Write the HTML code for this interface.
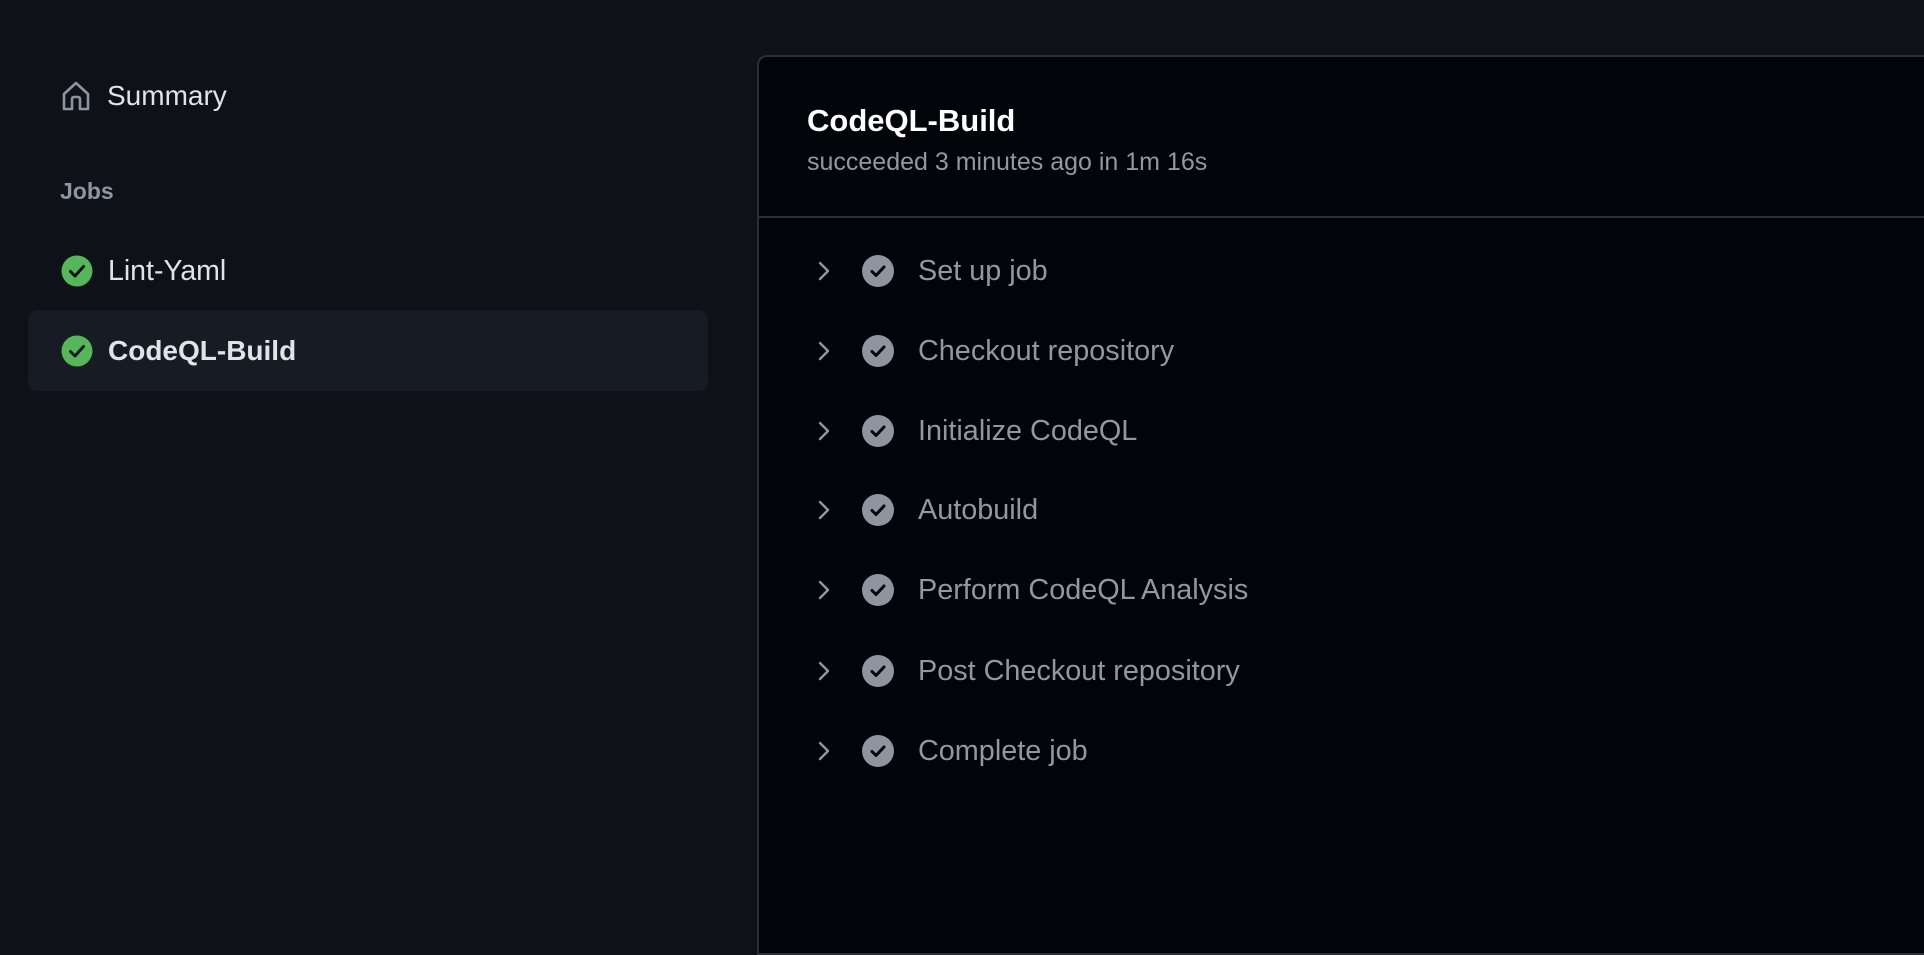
<!DOCTYPE html>
<html><head><meta charset="utf-8">
<style>
*{margin:0;padding:0;box-sizing:border-box}
html,body{width:1924px;height:854px;overflow:hidden;background:#0e1117;font-family:"Liberation Sans",sans-serif}
.side{position:absolute;left:0;top:0;width:740px;height:854px}
.item{position:absolute;left:61px;display:flex;align-items:center;color:#dfe4ea;font-size:28px}
.item svg{flex:none}
.item span{margin-left:15px}
.jobs{position:absolute;left:60px;top:178px;font-size:23px;font-weight:bold;color:#8d96a0}
.sel{position:absolute;left:28px;top:310px;width:680px;height:81px;background:#171b23;border-radius:10px}
.panel{position:absolute;left:757px;top:55px;width:1200px;height:900px;background:#010409;border:2px solid #2b3038;border-radius:10px 0 0 0}
.title{position:absolute;left:48px;top:46px;font-size:31px;font-weight:bold;color:#fff}
.sub{position:absolute;left:48px;top:91px;font-size:25px;color:#9198a1}
.div{position:absolute;left:0;right:0;top:159px;height:2px;background:#2b3038}
.step{position:absolute;left:58px;height:40px;display:flex;align-items:center;font-size:28.8px;color:#9198a1}
.step .chev{width:14px;margin-left:0}
.step .c{margin-left:31px}
.step span{margin-left:24px}
</style></head><body>
<div class="side">
  <div class="item" style="top:78px;height:36px">
    <svg width="30" height="32" viewBox="0 0 30 32"><path d="M3 14 L15 3 L27 14 V29 H19 V19 Q19 17 17 17 H13 Q11 17 11 19 V29 H3 Z" fill="none" stroke="#8d96a0" stroke-width="2.6" stroke-linejoin="round"/></svg>
    <span style="margin-left:16px">Summary</span>
  </div>
  <div class="jobs">Jobs</div>
  <div class="item" style="top:254px;height:34px">
    <svg width="32" height="32" viewBox="0 0 32 32"><circle cx="16" cy="16" r="15.5" fill="#57b65a"/><path d="M9.5 16.5 L14 21 L22.5 11.5" fill="none" stroke="#0e1117" stroke-width="3" stroke-linecap="round" stroke-linejoin="round"/></svg>
    <span style="font-size:28.5px">Lint-Yaml</span>
  </div>
  <div class="sel"></div>
  <div class="item" style="top:334px;height:34px">
    <svg width="32" height="32" viewBox="0 0 32 32"><circle cx="16" cy="16" r="15.5" fill="#57b65a"/><path d="M9.5 16.5 L14 21 L22.5 11.5" fill="none" stroke="#171b23" stroke-width="3" stroke-linecap="round" stroke-linejoin="round"/></svg>
    <span style="font-weight:bold">CodeQL-Build</span>
  </div>
</div>
<div class="panel">
  <div class="title">CodeQL-Build</div>
  <div class="sub">succeeded 3 minutes ago in 1m 16s</div>
  <div class="div"></div>
  <div class="step" style="top:194px"><svg class="chev" width="14" height="22" viewBox="0 0 14 22"><path d="M3 3 L11 11 L3 19" fill="none" stroke="#9198a1" stroke-width="2.4" stroke-linecap="round" stroke-linejoin="round"/></svg><svg class="c" width="32" height="32" viewBox="0 0 32 32"><circle cx="16" cy="16" r="16" fill="#8d96a0"/><path d="M10 16.5 L14 20.5 L22 12" fill="none" stroke="#010409" stroke-width="3" stroke-linecap="round" stroke-linejoin="round"/></svg><span>Set up job</span></div>
  <div class="step" style="top:274px"><svg class="chev" width="14" height="22" viewBox="0 0 14 22"><path d="M3 3 L11 11 L3 19" fill="none" stroke="#9198a1" stroke-width="2.4" stroke-linecap="round" stroke-linejoin="round"/></svg><svg class="c" width="32" height="32" viewBox="0 0 32 32"><circle cx="16" cy="16" r="16" fill="#8d96a0"/><path d="M10 16.5 L14 20.5 L22 12" fill="none" stroke="#010409" stroke-width="3" stroke-linecap="round" stroke-linejoin="round"/></svg><span>Checkout repository</span></div>
  <div class="step" style="top:354px"><svg class="chev" width="14" height="22" viewBox="0 0 14 22"><path d="M3 3 L11 11 L3 19" fill="none" stroke="#9198a1" stroke-width="2.4" stroke-linecap="round" stroke-linejoin="round"/></svg><svg class="c" width="32" height="32" viewBox="0 0 32 32"><circle cx="16" cy="16" r="16" fill="#8d96a0"/><path d="M10 16.5 L14 20.5 L22 12" fill="none" stroke="#010409" stroke-width="3" stroke-linecap="round" stroke-linejoin="round"/></svg><span>Initialize CodeQL</span></div>
  <div class="step" style="top:433px"><svg class="chev" width="14" height="22" viewBox="0 0 14 22"><path d="M3 3 L11 11 L3 19" fill="none" stroke="#9198a1" stroke-width="2.4" stroke-linecap="round" stroke-linejoin="round"/></svg><svg class="c" width="32" height="32" viewBox="0 0 32 32"><circle cx="16" cy="16" r="16" fill="#8d96a0"/><path d="M10 16.5 L14 20.5 L22 12" fill="none" stroke="#010409" stroke-width="3" stroke-linecap="round" stroke-linejoin="round"/></svg><span>Autobuild</span></div>
  <div class="step" style="top:513px"><svg class="chev" width="14" height="22" viewBox="0 0 14 22"><path d="M3 3 L11 11 L3 19" fill="none" stroke="#9198a1" stroke-width="2.4" stroke-linecap="round" stroke-linejoin="round"/></svg><svg class="c" width="32" height="32" viewBox="0 0 32 32"><circle cx="16" cy="16" r="16" fill="#8d96a0"/><path d="M10 16.5 L14 20.5 L22 12" fill="none" stroke="#010409" stroke-width="3" stroke-linecap="round" stroke-linejoin="round"/></svg><span>Perform CodeQL Analysis</span></div>
  <div class="step" style="top:594px"><svg class="chev" width="14" height="22" viewBox="0 0 14 22"><path d="M3 3 L11 11 L3 19" fill="none" stroke="#9198a1" stroke-width="2.4" stroke-linecap="round" stroke-linejoin="round"/></svg><svg class="c" width="32" height="32" viewBox="0 0 32 32"><circle cx="16" cy="16" r="16" fill="#8d96a0"/><path d="M10 16.5 L14 20.5 L22 12" fill="none" stroke="#010409" stroke-width="3" stroke-linecap="round" stroke-linejoin="round"/></svg><span>Post Checkout repository</span></div>
  <div class="step" style="top:674px"><svg class="chev" width="14" height="22" viewBox="0 0 14 22"><path d="M3 3 L11 11 L3 19" fill="none" stroke="#9198a1" stroke-width="2.4" stroke-linecap="round" stroke-linejoin="round"/></svg><svg class="c" width="32" height="32" viewBox="0 0 32 32"><circle cx="16" cy="16" r="16" fill="#8d96a0"/><path d="M10 16.5 L14 20.5 L22 12" fill="none" stroke="#010409" stroke-width="3" stroke-linecap="round" stroke-linejoin="round"/></svg><span>Complete job</span></div>
</div>
</body></html>
